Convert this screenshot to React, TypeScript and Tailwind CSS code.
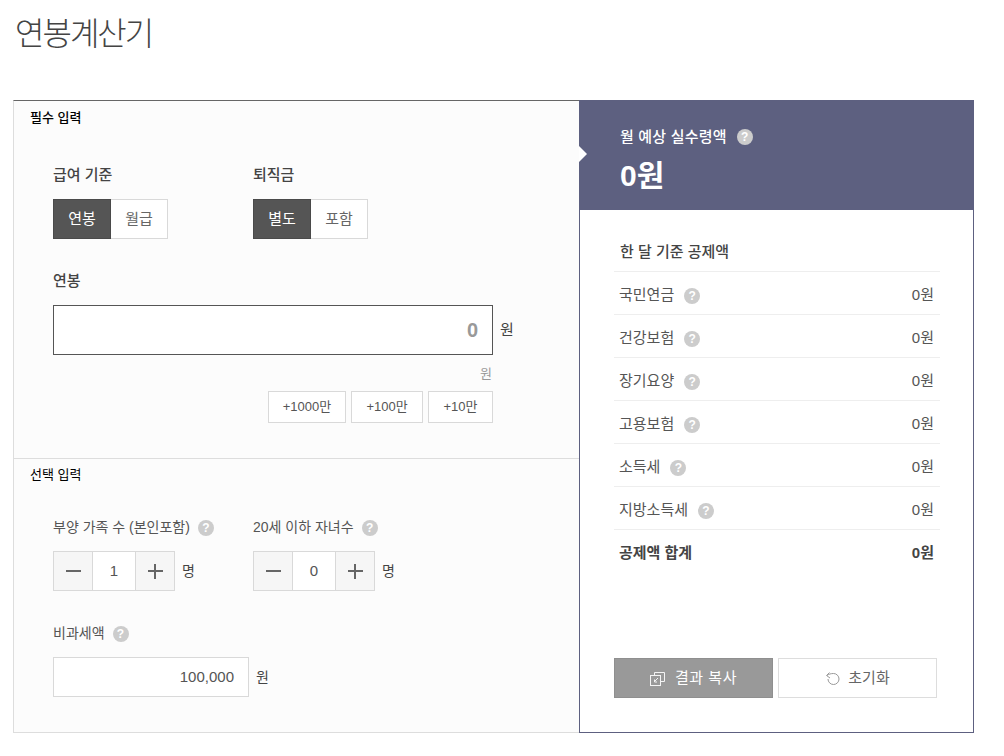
import React from 'react';

const font = { fontFamily: '"Liberation Sans", "Noto Sans CJK KR", sans-serif' };

const Help = ({ className = '' }: { className?: string }) => (
  <span className={`inline-flex items-center justify-center w-4 h-4 rounded-full bg-[#cccccc] text-white text-[12px] font-bold leading-none ${className}`}>?</span>
);

const Stepper = ({ value }: { value: string }) => (
  <div className="flex items-center">
    <div className="flex h-10 border border-[#d9d9d9] text-[#666]">
      <button className="w-[39px] flex items-center justify-center bg-[#f6f6f6] border-r border-[#d9d9d9]">
        <span className="block w-[15px] h-[2px] bg-[#666]" />
      </button>
      <div className="w-[42px] flex items-center justify-center bg-white text-[15px] text-[#555]">{value}</div>
      <button className="w-[39px] flex items-center justify-center bg-[#f6f6f6] border-l border-[#d9d9d9] relative">
        <span className="block w-[15px] h-[2px] bg-[#666]" />
        <span className="absolute block w-[2px] h-[15px] bg-[#666]" />
      </button>
    </div>
    <span className="ml-[7px] text-sm text-[#444]">명</span>
  </div>
);

const Toggle = ({ on, off }: { on: string; off: string }) => (
  <div className="flex h-10 text-[15px]">
    <div className="w-[58px] flex items-center justify-center bg-[#555] border border-[#4a4a4a] text-white">{on}</div>
    <div className="w-[57px] flex items-center justify-center bg-white border border-l-0 border-[#d9d9d9] text-[#666]">{off}</div>
  </div>
);

const rows = ['국민연금', '건강보험', '장기요양', '고용보험', '소득세', '지방소득세'];

export default function App() {
  return (
    <div style={font} className="w-[1004px] h-[756px] bg-white overflow-hidden pl-[13px]">
      <h1 className="h-[100px] pt-[12px] pl-[2px] text-[32px] leading-[44px] font-light text-[#444] tracking-[-2px]">연봉계산기</h1>

      <div className="flex w-[961px] h-[633px]">
        <div className="w-[566px] bg-[#fcfcfc] border-l border-b border-[#dddddd] border-t-[#666] border-t">
          <section className="h-[358px] border-b border-[#dddddd] pl-[16px] relative">
            <h2 className="pt-[8px] text-[13px] leading-[18px] font-medium text-black">필수 입력</h2>
            <div className="flex mt-[38px] pl-[23px]">
              <div className="w-[200px]">
                <p className="text-[15px] leading-5 text-[#444] font-medium">급여 기준</p>
                <div className="mt-[14px]"><Toggle on="연봉" off="월급" /></div>
              </div>
              <div>
                <p className="text-[15px] leading-5 text-[#444] font-medium">퇴직금</p>
                <div className="mt-[14px]"><Toggle on="별도" off="포함" /></div>
              </div>
            </div>
            <div className="pl-[23px] mt-[32px]">
              <p className="text-[15px] leading-5 text-[#444] font-medium">연봉</p>
              <div className="flex items-center mt-[14px]">
                <div className="w-[440px] h-[50px] border border-[#555] bg-white flex items-center justify-end pr-[14px] text-xl font-bold text-[#999]">0</div>
                <span className="ml-[7px] text-[15px] text-[#444]">원</span>
              </div>
              <p className="w-[440px] text-right pr-[1px] mt-[9px] text-[13px] leading-5 text-[#999]">원</p>
              <div className="w-[440px] flex justify-end gap-[5px] mt-[7px] text-[13px] text-[#555]">
                <button className="w-[78px] h-8 border border-[#d9d9d9] bg-white">+1000만</button>
                <button className="w-[72px] h-8 border border-[#d9d9d9] bg-white">+100만</button>
                <button className="w-[65px] h-8 border border-[#d9d9d9] bg-white">+10만</button>
              </div>
            </div>
          </section>

          <section className="pl-[16px]">
            <h2 className="pt-[7px] text-[13px] leading-[18px] text-black">선택 입력</h2>
            <div className="flex mt-[33px] pl-[23px]">
              <div className="w-[200px]">
                <p className="flex items-center text-sm leading-5 text-[#555]">부양 가족 수 (본인포함)<Help className="ml-2 mt-[1px]" /></p>
                <div className="mt-[14px]"><Stepper value="1" /></div>
              </div>
              <div>
                <p className="flex items-center text-sm leading-5 text-[#555]">20세 이하 자녀수<Help className="ml-2 mt-[1px]" /></p>
                <div className="mt-[14px]"><Stepper value="0" /></div>
              </div>
            </div>
            <div className="pl-[23px] mt-[32px]">
              <p className="flex items-center text-sm leading-5 text-[#555]">비과세액<Help className="ml-2 mt-[2px]" /></p>
              <div className="flex items-center mt-[14px]">
                <div className="w-[196px] h-10 border border-[#d9d9d9] bg-white flex items-center justify-end pr-[14px] text-[15px] text-[#555]">100,000</div>
                <span className="ml-[7px] text-sm text-[#444]">원</span>
              </div>
            </div>
          </section>
        </div>

        <div className="w-[395px] border-x border-b border-[#5d6080] bg-white flex flex-col relative">
          <div className="h-[110px] -mx-px bg-[#5d6080] pl-[41px] pt-[27px] text-white relative">
            <span className="absolute left-0 top-[46px] w-0 h-0 border-y-[8px] border-y-transparent border-l-[8px] border-l-white" />
            <p className="flex items-center text-[15px] leading-5 font-medium tracking-[0.2px]">월 예상 실수령액<Help className="ml-[10px]" /></p>
            <p className="mt-[11px] text-[30px] leading-9 font-bold">0원</p>
          </div>
          <div className="pl-[34px] pr-[33px] flex-1 flex flex-col">
            <p className="pt-[32px] pb-[9px] pl-[6px] text-[15px] leading-5 font-medium text-[#444] border-b border-[#eeeeee]">한 달 기준 공제액</p>
            {rows.map(label => (
              <div key={label} className="h-[43px] pt-[4px] flex items-center justify-between pl-[6px] pr-[6px] border-b border-[#eeeeee] text-[15px] text-[#555]">
                <span className="flex items-center -ml-[1px]">{label}<Help className="ml-[10px] mt-[1px]" /></span>
                <span>0원</span>
              </div>
            ))}
            <div className="h-[44px] pt-[2px] flex items-center justify-between pl-[6px] pr-[6px] text-[15px] font-bold text-[#444]">
              <span className="-ml-[1px]">공제액 합계</span>
              <span>0원</span>
            </div>
            <div className="mt-auto mb-[34px] w-[323px] flex justify-between">
              <button className="w-[159px] h-10 bg-[#999] border border-[#8f8f8f] text-white text-[15px] tracking-[0.5px] flex items-center justify-center gap-[10px]">
                <svg width="15" height="15" viewBox="0 0 15 15" fill="none" stroke="#f4f4f4" strokeWidth="1">
                  <path d="M4.5 4.5V1.5H14.5V10.5H10.5" />
                  <rect x="0.5" y="4.5" width="10" height="10" />
                  <path d="M4 11L8 7M4.5 8.5V11H7" />
                </svg>
                결과 복사
              </button>
              <button className="w-[159px] h-10 bg-white border border-[#dddddd] text-[#666] text-[15px] flex items-center justify-center gap-[8px]">
                <svg width="15" height="15" viewBox="0 0 15 15" fill="none" stroke="#999" strokeWidth="1">
                  <path d="M2 4.5C3.5 3.2 6 2.5 8.5 2.5A5.5 5.5 0 1 1 3 8" />
                  <path d="M4.5 1.5L1.5 4.5L5 7" />
                </svg>
                초기화
              </button>
            </div>
          </div>
        </div>
      </div>
    </div>
  );
}
